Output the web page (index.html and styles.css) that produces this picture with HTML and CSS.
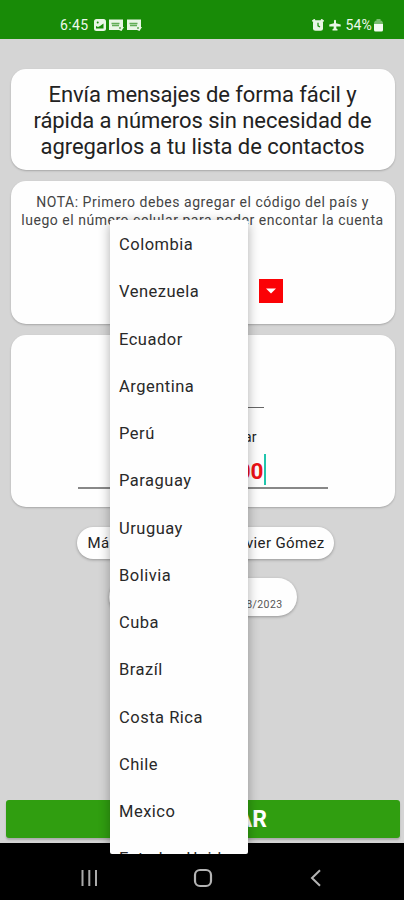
FILE: index.html
```html
<!DOCTYPE html>
<html lang="es">
<head>
<meta charset="utf-8">
<title>Mensajes</title>
<link rel="stylesheet" href="styles.css">
</head>
<body>
<div class="phone">
  <header class="status">
    <div class="status-left">
      <span>6:45</span>
      <svg width="12" height="12" viewBox="0 0 12 12"><rect width="12" height="12" rx="2.5" fill="#e9f6e6"/><path d="M2 9.5V7l2 1 2-1 3.500-2.500V9.500z" fill="#188b07"/><circle cx="3.700" cy="3.600" r="1" fill="#188b07"/></svg>
      <svg width="15" height="12" viewBox="0 0 15 12"><path d="M0 .5h14V8h1l-2.500 4L10 11H0z" fill="#e9f6e6"/><path d="M2.500 4.500h8M3 6.500h7M10 9h2" stroke="#60ad55" stroke-width="1.300"/></svg>
      <svg width="15" height="12" viewBox="0 0 15 12"><path d="M0 .5h14V8h1l-2.500 4L10 11H0z" fill="#e9f6e6"/><path d="M2.500 4.500h8M3 6.500h7M10 9h2" stroke="#60ad55" stroke-width="1.300"/></svg>
    </div>
    <div class="status-right">
      <svg width="12" height="12" viewBox="0 0 12 12"><path d="M.5 2.500L3 .5M11.500 2.500L9 .5" stroke="#e9f6e6" stroke-width="2"/><rect x="1" y="1.300" width="10" height="10.400" rx="2.500" fill="#e9f6e6"/><path d="M6 3.800V6.800L8 8" fill="none" stroke="#188b07" stroke-width="1.200"/></svg>
      <svg class="plane" width="12" height="12" viewBox="0 0 12 12"><path d="M5 1.500Q6 0 7 1.500V4.300L11.700 5.500V7.600H7.300V9.500L8.500 10.300V11.500H3.500V10.300L4.700 9.500V7.600H.3V5.500L5 4.300z" fill="#e9f6e6"/></svg>
      <span>54%</span>
      <svg class="battery" width="9" height="13" viewBox="0 0 9 13"><path d="M2.500 0h4v1.500Q9 1.500 9 5H0Q0 1.500 2.500 1.500z" fill="#78bd6e"/><path d="M0 5h9v6q0 1.500-1.500 1.500h-6Q0 12.500 0 11z" fill="#f4fbf3"/></svg>
    </div>
  </header>

  <main class="content">
    <section class="card intro">
      <h1>Envía mensajes de forma fácil y<br>rápida a números sin necesidad de<br>agregarlos a tu lista de contactos</h1>
    </section>
    <section class="card note">
      <p>NOTA: Primero debes agregar el código del país y<br>luego el número celular para poder encontar la cuenta</p>
      <button class="drop" aria-label="País"><svg width="10" height="6" viewBox="0 0 10 6"><path d="M0 .5h10L5 5.500z" fill="#fff"/></svg></button>
    </section>
    <section class="card form">
      <div class="code-line"></div>
      <div class="field-label">Número celular</div>
      <div class="number"><span>300</span></div>
    </section>
    <div class="pill author"><span>Má</span><span>Javier Gómez</span></div>
    <div class="pill version">08/2023</div>
    <button class="send">CONTINUAR</button>
  </main>

  <nav class="navbar">
    <svg width="18" height="18" viewBox="0 0 18 18"><path d="M2.500 1v16M9.300 1v16M16 1v16" stroke="#aaa" stroke-width="2"/></svg>
    <svg class="home" width="20" height="20" viewBox="0 0 20 20"><rect x="2" y="2" width="16" height="16" rx="5" fill="none" stroke="#b4b4b4" stroke-width="2.200"/></svg>
    <svg width="12" height="18" viewBox="0 0 12 18"><path d="M10 1.200L2 9l8 7.800" fill="none" stroke="#b4b4b4" stroke-width="2"/></svg>
  </nav>

  <ul class="menu">
    <li>Colombia</li><li>Venezuela</li><li>Ecuador</li><li>Argentina</li><li>Perú</li><li>Paraguay</li><li>Uruguay</li><li>Bolivia</li><li>Cuba</li><li>Brazíl</li><li>Costa Rica</li><li>Chile</li><li>Mexico</li><li>Estados Unidos</li>
  </ul>
</div>
</body>
</html>
```

FILE: styles.css
```css
* { box-sizing: border-box; }
body { margin: 0; font-family: Roboto, "Liberation Sans", sans-serif; color: #222; }
svg { display: block; flex: none; }
button { border: 0; padding: 0; font-family: inherit; }
.phone { position: relative; width: 404px; height: 900px; overflow: hidden; display: flex; flex-direction: column; background: #d5d5d5; }

.status { height: 39px; flex: none; background: #188b07; color: #eef9ec; display: flex; justify-content: space-between; padding: 13px 21px 0 60px; font-size: 14px; line-height: 24px; }
.status-left, .status-right { display: flex; align-items: center; height: 24px; }
.status-left { gap: 3px; letter-spacing: .4px; }
.status-left span { margin-right: 2px; }
.plane { margin: 0 4px 0 5px; }
.status-right span { letter-spacing: .2px; }
.battery { margin-left: 2px; }

.content { flex: 1; display: flex; flex-direction: column; align-items: center; padding: 30px 4px 0 5px; }
.card { width: 384px; background: #fefefe; border-radius: 15px; box-shadow: 0 1px 2px rgba(0, 0, 0, .22); text-align: center; flex: none; }
.intro { height: 101px; padding-top: 13px; margin-bottom: 11px; }
h1 { margin: 0; font-size: 22px; line-height: 26px; font-weight: 400; letter-spacing: -.06px; white-space: nowrap; }
.note { height: 143px; padding-top: 12px; margin-bottom: 11px; display: flex; flex-direction: column; }
.note p { margin: 0; font-size: 14px; line-height: 18px; letter-spacing: .53px; color: #444; white-space: nowrap; }
.drop { width: 24px; height: 24px; margin: 50px 0 0 248px; background: #fb0206; display: grid; place-items: center; }

.form { height: 172px; margin-bottom: 20px; display: flex; flex-direction: column; align-items: center; }
.code-line { width: 122px; height: 1px; margin-top: 72px; flex: none; background: #666; }
.field-label { width: 108px; margin-top: 20px; text-align: right; font-size: 14px; line-height: 18px; letter-spacing: .1px; }
.number { width: 250px; height: 35px; margin-top: 8px; border-bottom: 2px solid #888; display: flex; justify-content: flex-end; padding-right: 62px; }
.number span { height: 31px; border-right: 2px solid #20c5ad; color: #ec1116; font-size: 22.500px; font-weight: 700; line-height: 35px; }

.pill { background: #fefefe; box-shadow: 0 1px 3px rgba(0, 0, 0, .3); display: flex; flex: none; }
.author { width: 257px; height: 32px; border-radius: 16px; margin: 0 0 19px 5px; justify-content: space-between; padding: 0 9px 0 11px; font-size: 15px; line-height: 32px; letter-spacing: .35px; }
.version { width: 188px; height: 38px; border-radius: 19px; justify-content: flex-end; align-items: flex-end; padding: 0 14px 5px 0; font-size: 10.500px; letter-spacing: .4px; color: #555; }
.send { width: 394px; height: 38px; margin: auto 0 5px; border-radius: 3px; background: #309e10; color: #fff; font-size: 23px; font-weight: 700; line-height: 39px; text-align: center; box-shadow: 0 2px 2px rgba(0, 0, 0, .2); flex: none; }

.navbar { height: 57px; flex: none; background: #000; display: flex; justify-content: space-between; align-items: center; padding: 12px 82px 0 80px; }
.home { margin-right: 3px; }

.menu { position: absolute; left: 110px; top: 220px; width: 138px; height: 634px; margin: 0; padding: 1px 0 0 9px; list-style: none; overflow: hidden; background: #fefefe; border-radius: 2px; box-shadow: 0 3px 12px rgba(0, 0, 0, .32); }
.menu li { height: 47.250px; line-height: 48px; font-size: 16.500px; letter-spacing: .5px; white-space: nowrap; color: #292929; }
```
